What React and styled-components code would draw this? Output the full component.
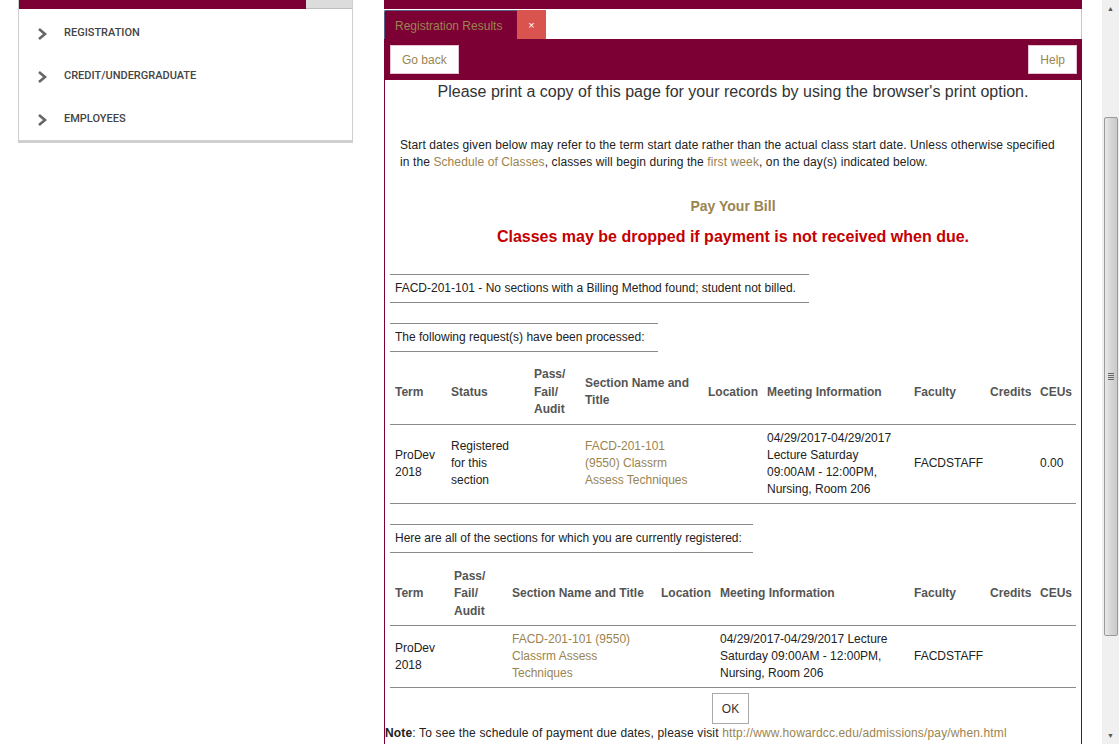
import React from 'react'
import styled, { createGlobalStyle } from 'styled-components'

const maroon = '#7d0034'
const tan = '#9a8450'

const Global = createGlobalStyle`
  html, body { margin: 0; padding: 0; background: #fff; }
  body { font-family: "Liberation Sans", Arial, sans-serif; color: #333; }
  #root { height: 744px; overflow: hidden; }
`

const Page = styled.div`
  display: flex;
  height: 744px;
  width: 1120px;
`

const Sidebar = styled.div`
  margin-left: 18px;
  width: 333px;
  align-self: flex-start;
  background: #fff;
  border: 1px solid #cfcfcf;
  border-top: none;
  border-bottom: 3px solid #cfcfcf;
`
const SideTop = styled.div`
  display: flex;
  height: 9px;
`
const SideTopMain = styled.div`
  flex: 1;
  background: ${maroon};
`
const SideTopTab = styled.div`
  width: 46px;
  background: #dcdcdc;
  border-bottom: 1px solid #bdbdbd;
`
const SideList = styled.div`
  padding: 2px 0 0;
`
const SideItem = styled.div`
  display: flex;
  align-items: center;
  height: 43px;
  padding-left: 17px;
  font-family: Roboto, "Open Sans", sans-serif;
  font-weight: 500;
  font-size: 11px;
  color: #444;
`
const Chevron = styled.svg`
  width: 12px;
  height: 14px;
  margin-right: 16px;
  margin-top: 3px;
`

const Main = styled.div`
  margin-left: 31px;
  width: 698px;
  display: flex;
  flex-direction: column;
`
const TopBar = styled.div`
  height: 9px;
  background: ${maroon};
`
const TabRow = styled.div`
  display: flex;
  height: 30px;
  background: #fff;
  border-right: 1px solid #c8c8c8;
`
const Tab = styled.div`
  display: flex;
  align-items: center;
  padding: 1px 10px 0;
  width: 133px;
  box-sizing: border-box;
  margin-top: 1px;
  background: ${maroon};
  color: ${tan};
  font-size: 12px;
  border-left: 1px solid #5a5f86;
  border-top: 1px solid #5a5f86;
  border-radius: 2px 0 0 0;
`
const CloseBtn = styled.div`
  width: 29px;
  margin-top: 1px;
  display: flex;
  align-items: center;
  justify-content: center;
  background: #d9534f;
  color: #fff;
  font-size: 11px;
`
const Toolbar = styled.div`
  display: flex;
  justify-content: space-between;
  align-items: flex-start;
  height: 41px;
  padding: 6px 5px 0 6px;
  box-sizing: border-box;
  background: ${maroon};
`
const ToolButton = styled.div`
  height: 29px;
  padding: 0 11px;
  display: flex;
  align-items: center;
  background: #fff;
  border: 1px solid #e6c3d3;
  box-sizing: border-box;
  color: ${tan};
  font-size: 12px;
`
const Content = styled.div`
  flex: 1;
  background: #fff;
  border-left: 1px solid ${maroon};
  border-right: 1px solid ${maroon};
`
const PrintNote = styled.div`
  text-align: center;
  font-size: 16px;
  color: #333;
  margin-top: 2px;
  line-height: 20px;
`
const Intro = styled.p`
  margin: 35px 15px 0;
  font-size: 12px;
  line-height: 17px;
  color: #222;
  letter-spacing: 0.1px;
`
const Link = styled.span`
  color: ${tan};
`
const PayBill = styled.div`
  text-align: center;
  font-size: 14px;
  font-weight: bold;
  color: ${tan};
  margin-top: 25px;
  line-height: 20px;
`
const Warning = styled.div`
  text-align: center;
  font-size: 16px;
  font-weight: bold;
  color: #c40000;
  margin-top: 11px;
  line-height: 20px;
`
const InfoBox = styled.div`
  margin: ${p => p.$top}px 0 0 5px;
  width: ${p => p.$width}px;
  box-sizing: border-box;
  border-top: 1px solid #8a8a8a;
  border-bottom: 1px solid #8a8a8a;
  padding: 5px;
  font-size: 12px;
  line-height: 17px;
  color: #222;
`
const Table = styled.table`
  margin: ${p => p.$top}px 0 0 5px;
  width: 686px;
  table-layout: fixed;
  border-collapse: collapse;
  font-size: 12px;
  color: #222;
`
const Th = styled.th`
  text-align: left;
  vertical-align: middle;
  padding: 5px;
  line-height: 17.5px;
  font-weight: bold;
  color: #555;
  border-bottom: 1px solid #8a8a8a;
`
const Td = styled.td`
  vertical-align: middle;
  padding: 5px;
  line-height: 17px;
  color: ${p => (p.$link ? tan : '#222')};
  border-bottom: 1px solid #8a8a8a;
`
const OkRow = styled.div`
  display: flex;
  justify-content: center;
  margin-top: 5px;
`
const OkButton = styled.div`
  width: 37px;
  height: 31px;
  box-sizing: border-box;
  border: 1px solid #aaa;
  display: flex;
  align-items: center;
  justify-content: center;
  font-size: 12px;
  color: #333;
  margin-right: 5px;
`
const Note = styled.div`
  font-size: 12px;
  line-height: 17px;
  color: #222;
  margin-top: 1px;
  letter-spacing: 0.15px;
`

const Gap = styled.div`
  flex: 1;
`
const Scrollbar = styled.div`
  width: 17px;
  margin-right: 1px;
  background: #f0f0f0;
  display: flex;
  flex-direction: column;
  align-items: center;
`
const Arrow = styled.div`
  height: ${p => p.$h}px;
  display: flex;
  align-items: center;
  justify-content: center;
  font-size: 7px;
  color: #555;
`
const Thumb = styled.div`
  width: 14px;
  height: 519px;
  box-sizing: border-box;
  border: 1px solid #9a9a9a;
  border-radius: 2px;
  background: linear-gradient(to right, #e8e8e8, #d6d6d6 50%, #c9c9c9);
  display: flex;
  align-items: center;
  justify-content: center;
`
const Grip = styled.div`
  width: 6px;
  height: 7px;
  background: repeating-linear-gradient(to bottom, #666 0 1px, transparent 1px 2px);
`

const lines = arr => arr.map((l, i) => (
  <React.Fragment key={i}>{i > 0 && <br />}{l}</React.Fragment>
))

const sideItems = ['REGISTRATION', 'CREDIT/UNDERGRADUATE', 'EMPLOYEES']

const App = () => (
  <Page>
    <Global />
    <Sidebar>
      <SideTop>
        <SideTopMain />
        <SideTopTab />
      </SideTop>
      <SideList>
        {sideItems.map(item => (
          <SideItem key={item}>
            <Chevron viewBox="0 0 12 14">
              <path d="M3 2 L9 7 L3 12" fill="none" stroke="#666" strokeWidth="2.6" />
            </Chevron>
            {item}
          </SideItem>
        ))}
      </SideList>
    </Sidebar>

    <Main>
      <TopBar />
      <TabRow>
        <Tab>Registration Results</Tab>
        <CloseBtn>×</CloseBtn>
      </TabRow>
      <Toolbar>
        <ToolButton>Go back</ToolButton>
        <ToolButton>Help</ToolButton>
      </Toolbar>
      <Content>
        <PrintNote>Please print a copy of this page for your records by using the browser's print option.</PrintNote>
        <Intro>
          Start dates given below may refer to the term start date rather than the actual class start date. Unless otherwise specified
          <br />
          in the <Link>Schedule of Classes</Link>, classes will begin during the <Link>first week</Link>, on the day(s) indicated below.
        </Intro>
        <PayBill>Pay Your Bill</PayBill>
        <Warning>Classes may be dropped if payment is not received when due.</Warning>

        <InfoBox $top={27} $width={419}>FACD-201-101 - No sections with a Billing Method found; student not billed.</InfoBox>
        <InfoBox $top={20} $width={268}>The following request(s) have been processed:</InfoBox>

        <Table $top={9}>
          <colgroup>
            {[56, 83, 51, 123, 59, 147, 76, 50, 41].map((w, i) => <col key={i} style={{ width: w }} />)}
          </colgroup>
          <thead>
            <tr>
              <Th>Term</Th>
              <Th>Status</Th>
              <Th>{lines(['Pass/', 'Fail/', 'Audit'])}</Th>
              <Th>{lines(['Section Name and', 'Title'])}</Th>
              <Th>Location</Th>
              <Th>Meeting Information</Th>
              <Th>Faculty</Th>
              <Th>Credits</Th>
              <Th>CEUs</Th>
            </tr>
          </thead>
          <tbody>
            <tr>
              <Td>{lines(['ProDev', '2018'])}</Td>
              <Td>{lines(['Registered', 'for this', 'section'])}</Td>
              <Td />
              <Td $link>{lines(['FACD-201-101', '(9550) Classrm', 'Assess Techniques'])}</Td>
              <Td />
              <Td>{lines(['04/29/2017-04/29/2017', 'Lecture Saturday', '09:00AM - 12:00PM,', 'Nursing, Room 206'])}</Td>
              <Td>FACDSTAFF</Td>
              <Td />
              <Td>0.00</Td>
            </tr>
          </tbody>
        </Table>

        <InfoBox $top={20} $width={363}>Here are all of the sections for which you are currently registered:</InfoBox>

        <Table $top={10}>
          <colgroup>
            {[59, 58, 149, 59, 194, 76, 50, 41].map((w, i) => <col key={i} style={{ width: w }} />)}
          </colgroup>
          <thead>
            <tr>
              <Th>Term</Th>
              <Th>{lines(['Pass/', 'Fail/', 'Audit'])}</Th>
              <Th>Section Name and Title</Th>
              <Th>Location</Th>
              <Th>Meeting Information</Th>
              <Th>Faculty</Th>
              <Th>Credits</Th>
              <Th>CEUs</Th>
            </tr>
          </thead>
          <tbody>
            <tr>
              <Td>{lines(['ProDev', '2018'])}</Td>
              <Td />
              <Td $link>{lines(['FACD-201-101 (9550)', 'Classrm Assess', 'Techniques'])}</Td>
              <Td />
              <Td>{lines(['04/29/2017-04/29/2017 Lecture', 'Saturday 09:00AM - 12:00PM,', 'Nursing, Room 206'])}</Td>
              <Td>FACDSTAFF</Td>
              <Td />
              <Td />
            </tr>
          </tbody>
        </Table>

        <OkRow>
          <OkButton>OK</OkButton>
        </OkRow>
        <Note>
          <b>Note</b>: To see the schedule of payment due dates, please visit <Link>http://www.howardcc.edu/admissions/pay/when.html</Link>
        </Note>
      </Content>
    </Main>

    <Gap />
    <Scrollbar>
      <Arrow $h={17}>▲</Arrow>
      <Arrow $h={100} />
      <Thumb><Grip /></Thumb>
      <Gap />
      <Arrow $h={17}>▼</Arrow>
    </Scrollbar>
  </Page>
)

export default App
